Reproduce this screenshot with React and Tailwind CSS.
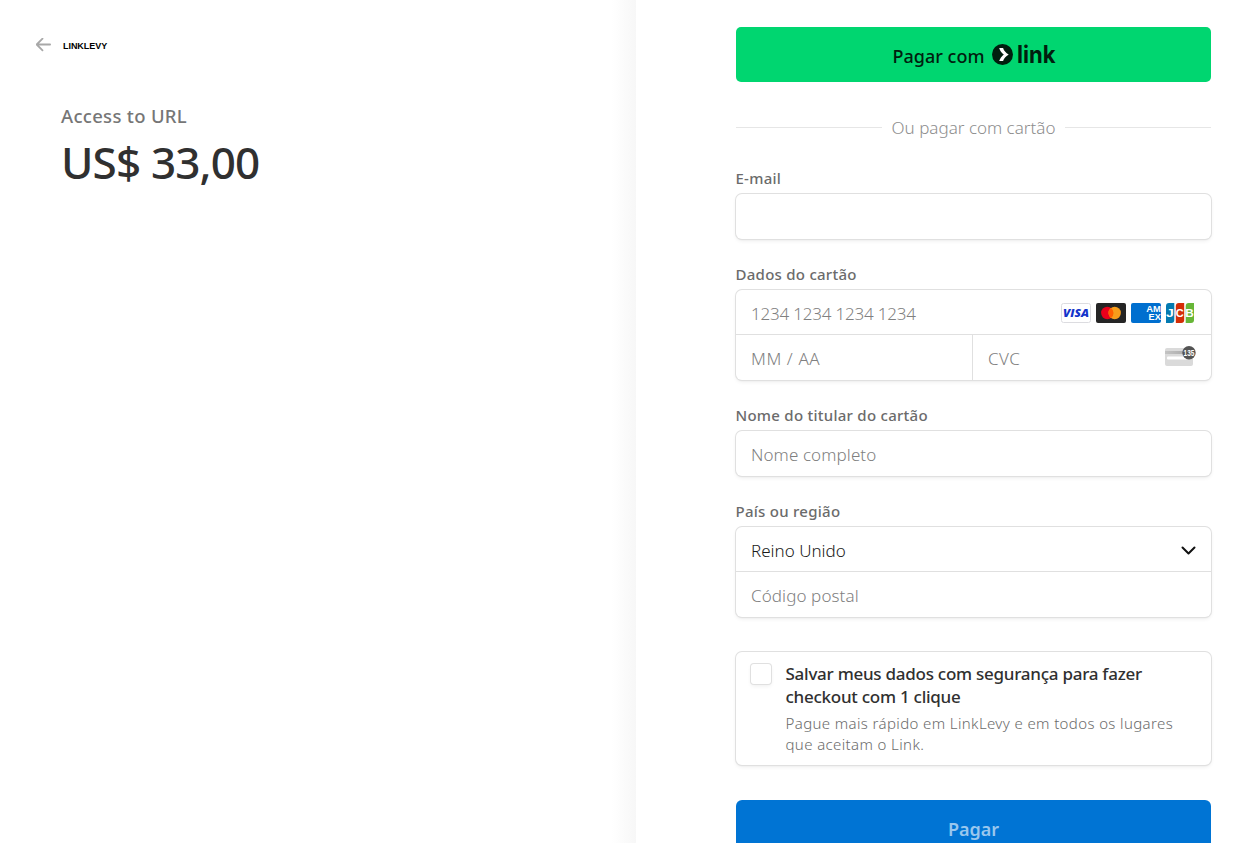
const FIELD =
  "rounded-md bg-white shadow-[0_0_0_1px_#e0e0e0,0_2px_4px_0_rgba(0,0,0,0.07),0_1px_2px_0_rgba(0,0,0,0.05)]";
const INPUT =
  "w-full bg-transparent px-[15px] pt-0.5 text-[17px] font-light text-[#1a1a1a] outline-none placeholder:text-[#808080]";

const BackArrow = () => (
  <svg className="-mt-px h-[14px] w-4" viewBox="0 0 16 14" fill="none" stroke="#a8a8a8" strokeWidth="1.8" strokeLinecap="round" strokeLinejoin="round">
    <path d="M14.1 6.5H.9M6.500 .7 .7 6.500l5.800 5.800" />
  </svg>
);

const LinkLogo = () => (
  <svg className="h-6 w-16 overflow-visible" viewBox="0 0 64 24" fill="#011e0f">
    <circle cx="10.5" cy="11.5" r="10.5" />
    <path d="M7.2 4.9h3.9c.7 2.6 2.7 4.8 5.6 6.6-2.9 1.8-4.9 4-5.6 6.6H7.2c.8-2.6 2.4-4.9 4.600-6.600-2.200-1.700-3.800-4-4.600-6.600Z" fill="#fff" />
    <text x="25" y="20.3" textLength="38.5" lengthAdjust="spacingAndGlyphs" fontFamily="Inter, sans-serif" fontWeight="700" fontSize="24">
      link
    </text>
  </svg>
);

const Visa = () => (
  <svg className="h-5 w-[30px]" viewBox="0 0 30 20">
    <rect x=".5" y=".5" width="29" height="19" rx="2" fill="#fff" stroke="#dcdce0" />
    <text x="2" y="14" textLength="26" lengthAdjust="spacingAndGlyphs" fontFamily="Open Sans, sans-serif" fontWeight="800" fontStyle="italic" fontSize="11" fill="#1434cb">
      VISA
    </text>
  </svg>
);

const Mastercard = () => (
  <svg className="h-5 w-[30px]" viewBox="0 0 30 20">
    <rect width="30" height="20" rx="2" fill="#252525" />
    <circle cx="11.3" cy="10" r="6.2" fill="#eb001b" />
    <circle cx="18.7" cy="10" r="6.2" fill="#f79e1b" />
    <path d="M15 5a6.2 6.2 0 0 1 0 10 6.2 6.2 0 0 1 0-10Z" fill="#ff5f00" />
  </svg>
);

const Amex = () => (
  <svg className="h-5 w-[30px]" viewBox="0 0 30 20" fontFamily="Liberation Sans, sans-serif" fontWeight="700" fontSize="8.6" fill="#fff">
    <rect width="30" height="20" rx="2" fill="#006fcf" />
    <text x="15.2" y="9.2" textLength="14.6" lengthAdjust="spacingAndGlyphs">
      AM
    </text>
    <text x="17.6" y="16.8" textLength="12.2" lengthAdjust="spacingAndGlyphs">
      EX
    </text>
  </svg>
);

const Jcb = () => (
  <svg className="h-5 w-[28px]" viewBox="0 0 28 20" fontFamily="Liberation Sans, sans-serif" fontWeight="700" fontSize="10.5" fill="#fff">
    <path d="M3 0h5.3v17a3 3 0 0 1-3 3H0V3a3 3 0 0 1 3-3Z" fill="#047ab1" />
    <path d="M12.8 0h5.4v17a3 3 0 0 1-3 3H9.8V3a3 3 0 0 1 3-3Z" fill="#d42d06" />
    <path d="M22.7 0H28v17a3 3 0 0 1-3 3h-5.3V3a3 3 0 0 1 3-3Z" fill="#67b637" />
    <text x="0" y="13.6" textLength="7.8" lengthAdjust="spacingAndGlyphs">
      J
    </text>
    <text x="9.8" y="13.6" textLength="8" lengthAdjust="spacingAndGlyphs">
      C
    </text>
    <text x="19.2" y="13.6" textLength="8.5" lengthAdjust="spacingAndGlyphs">
      B
    </text>
  </svg>
);

const CvcIcon = () => (
  <svg className="-mt-[3px] h-5 w-[31px] shrink-0" viewBox="0 0 31 20">
    <defs>
      <linearGradient id="stripe">
        <stop offset="0" stopColor="#c4c4c4" />
        <stop offset="1" stopColor="#a2a2a2" />
      </linearGradient>
    </defs>
    <rect y="2" width="28" height="18" rx="2" fill="#dadada" />
    <rect y="5" width="28" height="3" fill="url(#stripe)" />
    <rect x="2" y="10.6" width="20" height="3" rx="1" fill="#fff" />
    <circle cx="24" cy="6.7" r="6.7" fill="#545454" />
    <text x="18.6" y="9.6" textLength="10.8" lengthAdjust="spacingAndGlyphs" fontFamily="Liberation Sans, sans-serif" fontWeight="700" fontSize="8.2" fill="#fff">
      135
    </text>
  </svg>
);

const Label = ({ children }) => (
  <div className="mt-[25px] mb-1.5 flex h-5 items-center">
    <label className="-ml-[0.5px] text-[15px] leading-5 font-medium tracking-[0.26px] whitespace-nowrap text-[#6b6b6b]">{children}</label>
  </div>
);

const Summary = () => (
  <section className="flex w-[636px] shrink-0 justify-between">
    <div className="pt-[37px] pl-9">
      <div className="flex h-4 items-center gap-[11px]">
        <BackArrow />
        <span className="pt-0.5 font-['Liberation_Sans',sans-serif] text-[9px] leading-none font-bold tracking-[-0.05px] text-black">
          LINKLEVY
        </span>
      </div>
      <div className="mt-[49px] pl-[25px]">
        <p className="text-[18.5px] leading-7 font-medium tracking-[0.3px] text-[#767676]">Access to URL</p>
        <p className="mt-[3px] text-[44px] leading-[58px] font-medium tracking-[-0.85px] text-[#303030]">US$ 33,00</p>
      </div>
    </div>
    <div className="w-6 bg-linear-to-r from-white to-[#f7f7f7]" />
  </section>
);

export default function App() {
  return (
    <main className="flex h-[843px] w-[1257px] overflow-hidden bg-white font-['Noto_Sans',sans-serif]">
      <Summary />
      <form className="ml-[100px] w-[475px] shrink-0 pt-[27px]">
        <button type="button" className="flex h-[55px] w-full items-center justify-center gap-2 rounded-[5px] bg-[#00d670] pl-0.5">
          <span className="pt-[3px] text-[18px] font-medium text-[#011e0f]">Pagar com</span>
          <LinkLogo />
        </button>

        <div className="mt-[34px] flex h-6 items-center gap-2.5">
          <div className="-mt-px h-px flex-1 bg-[#e6e6e6]" />
          <span className="text-[17px] font-light text-[#8d8d8d]">Ou pagar com cartão</span>
          <div className="-mt-px h-px flex-1 bg-[#e6e6e6]" />
        </div>

        <div className="pt-[3px]">
          <Label>E-mail</Label>
          <div className={`flex h-[45px] ${FIELD}`}>
            <input type="email" className={INPUT} />
          </div>
        </div>

        <Label>Dados do cartão</Label>
        <div className={`h-[90px] ${FIELD}`}>
          <div className="flex h-[45px] items-center border-b border-[#e0e0e0] pt-[2px] pr-[17px]">
            <input className={`tracking-[-0.2px] ${INPUT}`} placeholder="1234 1234 1234 1234" />
            <div className="flex shrink-0 gap-[5px]">
              <Visa />
              <Mastercard />
              <Amex />
              <Jcb />
            </div>
          </div>
          <div className="flex h-[45px]">
            <div className="flex w-[237px] border-r border-[#e0e0e0]">
              <input className={`tracking-[0.6px] ${INPUT}`} placeholder="MM / AA" />
            </div>
            <div className="flex flex-1 items-center pr-[15px]">
              <input className={`tracking-[0.5px] ${INPUT}`} placeholder="CVC" />
              <CvcIcon />
            </div>
          </div>
        </div>

        <Label>Nome do titular do cartão</Label>
        <div className={`flex h-[45px] ${FIELD}`}>
          <input className={`tracking-[0.1px] ${INPUT}`} placeholder="Nome completo" />
        </div>

        <Label>País ou região</Label>
        <div className={`h-[90px] ${FIELD}`}>
          <div className="flex h-[45px] items-center justify-between border-b border-[#e0e0e0] px-[15px] pt-[3px]">
            <span className="text-[17px] font-light text-[#1a1a1a]">Reino Unido</span>
            <svg className="h-[9px] w-[15px]" viewBox="0 0 15 9" fill="none" stroke="#111" strokeWidth="2" strokeLinecap="round" strokeLinejoin="round">
              <path d="m1.5 1.5 6 6 6-6" />
            </svg>
          </div>
          <div className="flex h-[45px]">
            <input className={`tracking-[0.1px] ${INPUT}`} placeholder="Código postal" />
          </div>
        </div>

        <div className={`mt-[35px] flex h-[113px] gap-[13px] pt-[10px] pl-3.5 ${FIELD}`}>
          <div className="mt-0.5 ml-px size-5 shrink-0 rounded-[3px] bg-white shadow-[0_0_0_1px_#e0e0e0,0_2px_4px_0_rgba(0,0,0,0.07)]" />
          <div className="pl-[1.5px] whitespace-nowrap">
            <p className="text-[17px] leading-[23px] font-medium tracking-[-0.26px] text-[#303030]">
              Salvar meus dados com segurança para fazer
              <br />
              checkout com 1 clique
            </p>
            <p className="mt-[5px] text-[15px] leading-[21px] font-light tracking-[0.38px] text-[#6b6b6b]">
              Pague mais rápido em LinkLevy e em todos os lugares
              <br />
              que aceitam o Link.
            </p>
          </div>
        </div>

        <button type="button" className="mt-[35px] flex h-[58px] w-full items-center justify-center rounded-md bg-[#0074d4] text-[18px] font-semibold text-[#99c7ee]">
          Pagar
        </button>
      </form>
    </main>
  );
}
